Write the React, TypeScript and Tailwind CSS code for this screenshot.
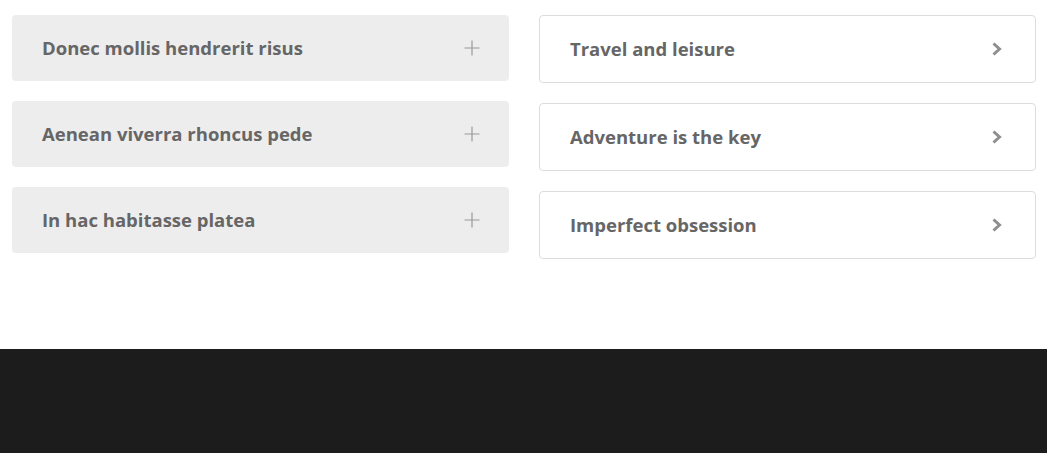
import React from "react";

const left = ["Donec mollis hendrerit risus", "Aenean viverra rhoncus pede", "In hac habitasse platea"];
const right = ["Travel and leisure", "Adventure is the key", "Imperfect obsession"];

function Plus() {
  return (
    <svg width="16" height="16" viewBox="0 0 16 16" className="shrink-0">
      <path d="M8 0.5V15.5M0.5 8H15.5" stroke="#9a9a9a" strokeWidth="1.2" fill="none" />
    </svg>
  );
}

function Chevron() {
  return (
    <svg width="10" height="14" viewBox="0 0 10 14" className="shrink-0">
      <path d="M1.5 1.5L7.5 7L1.5 12.5" stroke="#8e8e8e" strokeWidth="3" fill="none" strokeLinejoin="miter" />
    </svg>
  );
}

export default function App() {
  return (
    <div className="w-[1047px] h-[453px] bg-white flex flex-col" style={{ fontFamily: "'Open Sans', 'Liberation Sans', sans-serif" }}>
      <div className="h-[349px] pl-3 pt-[15px] grid grid-cols-[497px_497px] gap-x-[30px] items-start">
        <div className="flex flex-col gap-5">
          {left.map((t) => (
            <div key={t} className="h-[66px] rounded bg-[#ededed] flex items-center justify-between pl-[30px] pr-[29px]">
              <span className="text-[18.5px] font-bold text-[#666666]">{t}</span>
              <Plus />
            </div>
          ))}
        </div>
        <div className="flex flex-col gap-5">
          {right.map((t) => (
            <div key={t} className="h-[68px] rounded border border-[#dddddd] bg-white flex items-center justify-between pl-[30px] pr-[33px]">
              <span className="text-[18.5px] font-bold text-[#666666]">{t}</span>
              <Chevron />
            </div>
          ))}
        </div>
      </div>
      <div className="flex-1 bg-[#1c1c1c]" />
    </div>
  );
}
